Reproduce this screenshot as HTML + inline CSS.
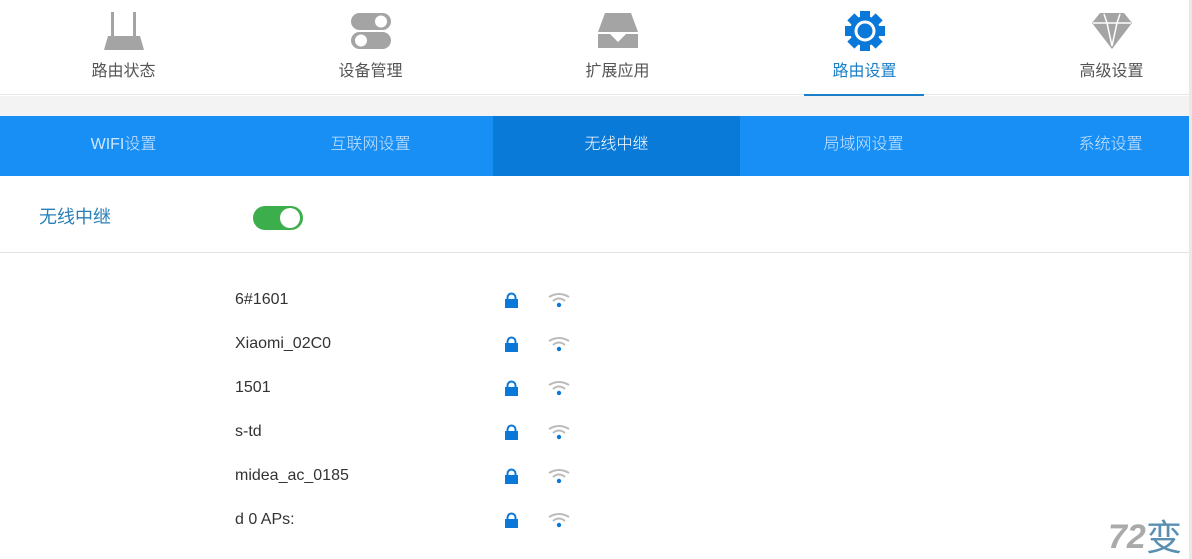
<!DOCTYPE html>
<html><head><meta charset="utf-8"><style>
*{margin:0;padding:0;box-sizing:border-box}
body{width:1192px;height:559px;background:#fff;font-family:"Liberation Sans","Noto Sans CJK SC",sans-serif;position:relative;overflow:hidden}
.top{position:absolute;left:0;top:0;width:1189px;height:95px;border-bottom:1px solid #e6e6e6}
.nav{position:absolute;top:0;width:247px;height:95px;text-align:center}
.nav svg{position:absolute;left:50%;transform:translateX(-50%);top:10px}
.nav span{position:absolute;left:0;right:0;top:57px;font-size:16px;color:#555}
.band{position:absolute;left:0;top:96px;width:1189px;height:20px;background:#f3f3f3}
.bar{position:absolute;left:0;top:116px;width:1189px;height:60px;background:#178ff5}
.tab{position:absolute;top:0;height:60px;width:247px;line-height:58px;text-align:center;color:#cfe6ff;font-size:16px;font-weight:300}
.rline{position:absolute;left:1189px;top:0;width:3px;height:559px;background:#e8e8e8}
.row{position:absolute;left:235px;font-size:16px;color:#333}
</style></head><body>
<div class="top">
 <div class="nav" style="left:0"><svg width="44" height="42" viewBox="0 0 44 42"><rect x="9" y="2" width="3" height="24" fill="#a4a4a4"/><rect x="31" y="2" width="3" height="24" fill="#a4a4a4"/><path d="M6 26H38L42 40H2Z" fill="#a4a4a4"/></svg><span>路由状态</span></div>
 <div class="nav" style="left:247px"><svg width="44" height="42" viewBox="0 0 44 42"><rect x="2" y="3" width="40" height="17" rx="8.5" fill="#a4a4a4"/><circle cx="32" cy="11.5" r="6" fill="#fff"/><rect x="2" y="22" width="40" height="17" rx="8.5" fill="#a4a4a4"/><circle cx="12" cy="30.5" r="6" fill="#fff"/></svg><span>设备管理</span></div>
 <div class="nav" style="left:494px"><svg width="44" height="42" viewBox="0 0 44 42"><path d="M9 3H35L42 22H2Z" fill="#a4a4a4"/><path d="M2 24H14L22 32L30 24H42V38H2Z" fill="#a4a4a4"/></svg><span>扩展应用</span></div>
 <div class="nav" style="left:741px"><svg width="44" height="42" viewBox="0 0 44 42"><g fill="#0a78d8" transform="translate(22 21)"><rect x="-5" y="-20" width="10" height="40"/><rect x="-5" y="-20" width="10" height="40" transform="rotate(45)"/><rect x="-5" y="-20" width="10" height="40" transform="rotate(90)"/><rect x="-5" y="-20" width="10" height="40" transform="rotate(135)"/><circle r="15"/></g><circle cx="22" cy="21" r="9" fill="none" stroke="#fff" stroke-width="3"/></svg><span style="color:#1a7fc8">路由设置</span><div style="position:absolute;left:63px;top:94px;width:120px;height:2px;background:#1a7fc8"></div></div>
 <div class="nav" style="left:988px"><svg width="44" height="42" viewBox="0 0 44 42"><path d="M10 3H34L42 13L22 39L2 13Z" fill="#a4a4a4"/><path d="M3 13H41M14 4L17 13L22 36L27 13L30 4" stroke="#fff" stroke-width="1.5" fill="none"/></svg><span>高级设置</span></div>
</div>
<div class="band"></div>
<div class="bar">
 <div class="tab" style="left:0">WIFI设置</div>
 <div class="tab" style="left:247px">互联网设置</div>
 <div class="tab" style="left:493px;background:#0a7ad8;color:#fff">无线中继</div>
 <div class="tab" style="left:740px">局域网设置</div>
 <div class="tab" style="left:987px">系统设置</div>
</div>
<div style="position:absolute;left:39px;top:203px;font-size:18px;color:#2a7fb8">无线中继</div>
<div style="position:absolute;left:253px;top:206px;width:50px;height:24px;border-radius:12px;background:#3dae4c"><div style="position:absolute;right:3px;top:2px;width:20px;height:20px;border-radius:50%;background:#fff"></div></div>
<div style="position:absolute;left:0;top:252px;width:1189px;height:1px;background:#e2e2e2"></div>
<div class="row" style="top:291px">6#1601</div>
<div class="row" style="top:335px">Xiaomi_02C0</div>
<div class="row" style="top:379px">1501</div>
<div class="row" style="top:423px">s-td</div>
<div class="row" style="top:467px">midea_ac_0185</div>
<div class="row" style="top:511px">d 0 APs:</div>
<svg style="position:absolute;left:0;top:0" width="1189" height="559">
<defs>
<g id="lk"><path d="M2.5 6V4.5a4 4 0 0 1 8 0V6" stroke="#0a78d8" stroke-width="2" fill="none"/><rect x="0" y="6" width="13" height="9" fill="#0a78d8"/></g>
<g id="wf"><path d="M1 5Q11 -1 21 5" stroke="#bbb" stroke-width="2" fill="none"/><path d="M5 9Q11 4 17 9" stroke="#bbb" stroke-width="2" fill="none"/><circle cx="11" cy="13" r="2.2" fill="#0a78d8"/></g>
</defs>
<use href="#lk" x="505" y="293"/><use href="#wf" x="548" y="292"/>
<use href="#lk" x="505" y="337"/><use href="#wf" x="548" y="336"/>
<use href="#lk" x="505" y="381"/><use href="#wf" x="548" y="380"/>
<use href="#lk" x="505" y="425"/><use href="#wf" x="548" y="424"/>
<use href="#lk" x="505" y="469"/><use href="#wf" x="548" y="468"/>
<use href="#lk" x="505" y="513"/><use href="#wf" x="548" y="512"/>
<text x="1108" y="548" font-size="34" font-weight="bold" fill="#aaa" font-style="italic" font-family="Liberation Sans">72</text>
<text x="1146" y="550" font-size="36" fill="#5a8fb0" font-family="Noto Sans CJK SC">变</text>
</svg>
<div class="rline"></div>
</body></html>
